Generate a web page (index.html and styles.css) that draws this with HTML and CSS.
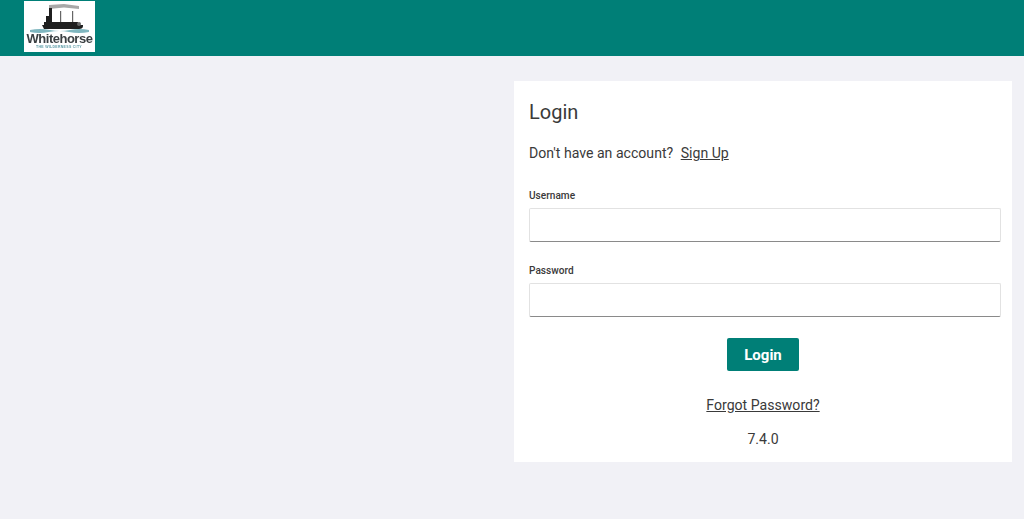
FILE: index.html
```html
<!DOCTYPE html>
<html>
<head>
<title>Login</title>
<link rel="stylesheet" href="styles.css">
</head>
<body>

<header class="topbar">
	<div class="logo">
		<svg width="71" height="51" viewBox="0 0 71 51">
			<!-- smoke -->
			<path d="M25 4 L40 3 L55 5 L55 8 L40 6.500 L25 8 Z" fill="#a8a8a8"/>
			<!-- stacks -->
			<rect x="36" y="10" width="1.200" height="12" fill="#666"/>
			<rect x="48" y="10" width="1.200" height="12" fill="#666"/>
			<!-- boat -->
			<rect x="22" y="15" width="6" height="7" fill="#1f1f1f"/>
			<rect x="25" y="7" width="3" height="9" fill="#1f1f1f"/>
			<rect x="20" y="21" width="34" height="3" fill="#1f1f1f"/>
			<path d="M18 24 H59 V25 Q59 28 55 28 H20 Z" fill="#1f1f1f"/>
			<circle cx="55" cy="23" r="2" fill="#666"/>
			<path d="M6 29 Q16 27 26 29 T46 29 T65 29 V31 Q55 33 45 31 T25 31 T6 31 Z" fill="#7fb6bf"/>
			<text x="35.500" y="41.500" class="logo-name" text-anchor="middle">Whitehorse</text>
			<text x="35" y="47" class="logo-tag" text-anchor="middle">THE WILDERNESS CITY</text>
		</svg>
	</div>
</header>

<main class="page">
	<section class="card">
		<h1 class="title">Login</h1>
		<p class="signup">Don't have an account? <a href="#" class="link">Sign Up</a></p>

		<form class="form">
			<label class="field-label" for="username">Username</label>
			<input class="field" type="text" id="username">

			<label class="field-label" for="password">Password</label>
			<input class="field" type="password" id="password">

			<button class="button" type="button">Login</button>
		</form>

		<div class="forgot"><a href="#" class="link">Forgot Password?</a></div>
		<div class="version">7.4.0</div>
	</section>
</main>

</body>
</html>
```

FILE: styles.css
```css
html, body {
  height: 100%;
}

body {
  margin: 0;
  background-color: #f1f1f6;
  color: #3a3a3a;
  font-family: Roboto, "Liberation Sans", sans-serif;
  overflow: hidden;
}

.topbar {
  height: 56px;
  padding: 1px 0 0 24px;
  box-sizing: border-box;
  background-color: #007f77;
}

.logo {
  width: 71px;
  height: 51px;
  overflow: hidden;
  background-color: #fff;
}

.logo svg {
  display: block;
  filter: blur(0.3px);
}

.logo-name {
  font-family: "Liberation Sans", sans-serif;
  font-size: 13px;
  font-weight: bold;
  letter-spacing: -0.5px;
  fill: #3a3f42;
}

.logo-tag {
  font-family: "Liberation Sans", sans-serif;
  font-size: 3.500px;
  font-weight: bold;
  letter-spacing: 0.3px;
  fill: #5a9aa5;
}

.page {
  display: flex;
  justify-content: flex-end;
  padding: 25px 12px 0 0;
}

.card {
  width: 498px;
  height: 381px;
  padding: 0 11px 0 15px;
  box-sizing: border-box;
  background-color: #fff;
}

.title {
  margin: 18px 0 0;
  font-size: 20px;
  line-height: 26px;
  font-weight: 400;
}

.signup {
  margin: 16px 0 0;
  font-size: 14.100px;
  line-height: 24px;
}

.signup .link {
  margin-left: 4px;
}

.link {
  color: #3a3a3a;
}

.form {
  display: flex;
  flex-direction: column;
}

.field-label {
  margin-top: 24px;
  font-size: 10.100px;
  line-height: 14px;
  font-weight: 500;
}

.field-label + .field {
  margin-top: 5px;
}

.field + .field-label {
  margin-top: 22px;
}

.field {
  height: 34px;
  padding: 0 8px;
  box-sizing: border-box;
  border: 1px solid #e2e2e2;
  border-bottom: 1px solid #8a8a8a;
  border-radius: 2px;
  background-color: #fff;
  outline: none;
}

.button {
  align-self: center;
  width: 72px;
  height: 33px;
  margin: 21px 4px 0 0;
  border: none;
  border-radius: 2px;
  background-color: #007f77;
  color: #fff;
  font-family: inherit;
  font-size: 15px;
  font-weight: 700;
  cursor: pointer;
}

.forgot {
  margin-top: 24px;
  padding-right: 4px;
  text-align: center;
  font-size: 14.100px;
  line-height: 20px;
}

.version {
  margin-top: 14px;
  padding-right: 4px;
  text-align: center;
  font-size: 14.100px;
  line-height: 20px;
}
```
